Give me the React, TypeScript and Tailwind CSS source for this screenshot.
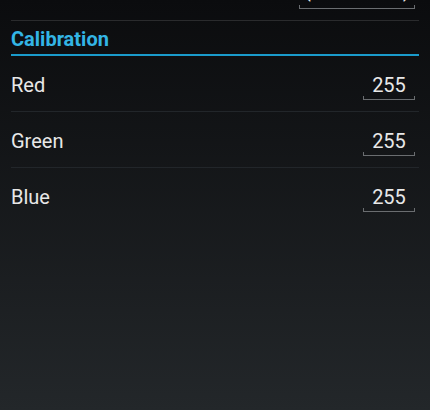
const ROWS = [
  { label: "Red", value: "255" },
  { label: "Green", value: "255" },
  { label: "Blue", value: "255" },
];

function EditField({ value, width, textClass = "" }: { value: string; width: string; textClass?: string }) {
  return (
    <div className={`relative mr-[4px] flex h-[24px] justify-center ${width}`}>
      <span className={`text-[20px] leading-[24px] whitespace-nowrap text-[#e8e8e8] ${textClass}`}>{value}</span>
      {/* holo underline bracket */}
      <div className="absolute left-0 right-0 top-[23px] h-[4px] border-x border-b border-[#6a6d70]" />
    </div>
  );
}

function Row({ label, value, last }: { label: string; value: string; last?: boolean }) {
  return (
    <div className={`flex h-[56px] items-center justify-between pt-[2px] ${last ? "" : "border-b border-[#22262a]"}`}>
      <span className="text-[20px] leading-[24px] text-[#e8e8e8]">{label}</span>
      <EditField value={value} width="w-[52px]" />
    </div>
  );
}

export default function App() {
  return (
    <div
      className="h-[410px] w-[430px] overflow-hidden bg-gradient-to-b from-[#0b0c0e] to-[#23272a] px-[11px]"
      style={{ fontFamily: "Roboto, 'Noto Sans', sans-serif" }}
    >
      {/* previous row, scrolled mostly off the top */}
      <div className="-mt-[35px] flex h-[56px] items-center justify-end border-b border-[#2a2b2d] pt-[2px]">
        <EditField value="(Automatic)" width="w-[116px]" textClass="-mt-[4px]" />
      </div>

      {/* section header */}
      <div className="mt-[6px] border-b-2 border-[#1a9bcb] pb-[3px]">
        <h2 className="text-[20px] font-bold leading-[24px] text-[#33b5e5]">Calibration</h2>
      </div>

      <div>
        {ROWS.map((r, i) => (
          <Row key={r.label} label={r.label} value={r.value} last={i === ROWS.length - 1} />
        ))}
      </div>
    </div>
  );
}
